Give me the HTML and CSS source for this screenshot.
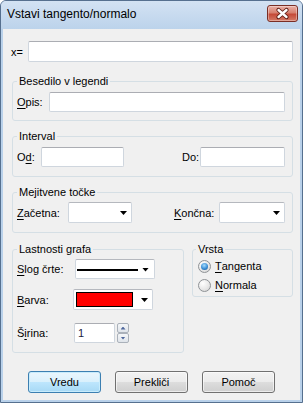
FILE: index.html
```html
<!DOCTYPE html>
<html>
<head>
<meta charset="UTF-8">
<title>Vstavi tangento/normalo</title>
<link rel="stylesheet" href="styles.css">
</head>
<body>
<div class="window">
<div class="titlebar">
<span class="title">Vstavi tangento/normalo</span>
<div class="close-btn">
<svg width="29" height="15" viewBox="0 0 29 15">
<path d="M10.5 4 L18.5 11 M18.5 4 L10.5 11" stroke="#5b1a12" stroke-width="4.2" stroke-linecap="round"/>
<path d="M10.5 4 L18.5 11 M18.5 4 L10.5 11" stroke="#fff" stroke-width="2.4" stroke-linecap="round"/>
</svg>
</div>
</div>
<div class="client">
<div class="row-x">
<label class="lbl-x" for="xVal">x=</label>
<input type="text" id="xVal" class="text grow tall">
</div>

<fieldset class="group g-first">
<legend>Besedilo v legendi</legend>
<div class="line">
<label class="lbl-opis" for="opis"><u>O</u>pis:</label>
<input type="text" id="opis" class="text grow">
</div>
</fieldset>

<fieldset class="group g-interval">
<legend>Interval</legend>
<div class="line">
<label class="lbl-od" for="od">O<u>d</u>:</label>
<input type="text" id="od" class="text w-od">
<label class="lbl-do" for="do">Do:</label>
<input type="text" id="do" class="text w-do">
</div>
</fieldset>

<fieldset class="group g-points">
<legend>Mejitvene točke</legend>
<div class="line">
<label class="lbl-zac"><u>Z</u>ačetna:</label>
<div class="combo w-zac"><span class="arrow"></span></div>
<label class="lbl-kon"><u>K</u>ončna:</label>
<div class="combo w-kon"><span class="arrow"></span></div>
</div>
</fieldset>

<div class="split">
<fieldset class="group props">
<legend>Lastnosti grafa</legend>
<div class="prop-row r-slog">
<label><u>S</u>log črte:</label>
<div class="combo short c-slog"><span class="line-sample"></span><span class="arrow"></span></div>
</div>
<div class="prop-row r-barva">
<label><u>B</u>arva:</label>
<div class="combo c-barva"><span class="swatch"></span><span class="arrow"></span></div>
</div>
<div class="prop-row r-sirina">
<label>Š<u>i</u>rina:</label>
<input type="text" class="text w-spin" value="1">
<div class="spin">
<div class="spin-btn"><span class="tri-up"></span></div>
<div class="spin-btn"><span class="tri-down"></span></div>
</div>
</div>
</fieldset>

<fieldset class="group kind">
<legend>Vrsta</legend>
<div class="radio-row"><span class="radio"><span class="dot"></span></span><u>T</u>angenta</div>
<div class="radio-row"><span class="radio"></span><u>N</u>ormala</div>
</fieldset>
</div>

<div class="buttons">
<button class="btn default">Vredu</button>
<button class="btn">Prekliči</button>
<button class="btn">Pomoč</button>
</div>
</div>
</div>
</body>
</html>
```

FILE: styles.css
```css
*{box-sizing:border-box;}
body{margin:0;background:#fff;font-family:"Liberation Sans",Arial,sans-serif;font-size:11px;color:#000;}
u{text-decoration:underline;text-underline-offset:2px;}

.window{width:303px;height:403px;display:flex;flex-direction:column;
border:1px solid #56708f;border-radius:6px 6px 0 0;background:#b9d1ea;}
.titlebar{height:28px;flex:none;display:flex;align-items:flex-start;justify-content:space-between;
padding:0 4px 0 6px;background:linear-gradient(#d3e2f3,#bcd3eb);border-radius:5px 5px 0 0;}
.title{font-size:12px;line-height:14px;margin-top:6px;}
.close-btn{width:31px;height:17px;margin-top:4px;border:1px solid #7a2e25;border-radius:3px;
background:linear-gradient(#e9b0a6 0%,#d7806f 45%,#c54a38 55%,#d47a66 100%);
box-shadow:inset 0 0 0 1px rgba(255,255,255,0.35);}
.close-btn svg{display:block;}

.client{flex:1;margin:0 2px 2px;background:#f0f0f0;padding:12px 7px 0 9px;}

.row-x{display:flex;align-items:center;}
.lbl-x{width:17px;margin-left:-1px;}

.text{height:20px;margin:0;padding:0 3px;border:1px solid #cfd6de;border-top-color:#abadb3;
border-radius:2px;background:#fff;font:inherit;color:#1c1c3c;outline:none;}
.text.tall{height:21px;}
.grow{flex:1;min-width:0;}

.group{margin:8px 0 0;padding:4px 7px 9px 4px;border:1px solid #d5dfe5;border-radius:3px;min-width:0;}
.group legend{padding:0 2px;line-height:14px;}
.g-first{margin-top:12px;padding-bottom:8px;}
.g-points{padding-top:3px;}

.line{display:flex;align-items:center;}
.lbl-opis{width:32px;}
.lbl-od{width:24px;}
.w-od{width:83px;}
.lbl-do{width:18px;margin-left:auto;}
.w-do{width:85px;}
.lbl-zac{width:51px;}
.w-zac{width:64px;}
.lbl-kon{width:45px;margin-left:auto;}
.w-kon{width:66px;}

.combo{height:21px;display:flex;align-items:center;border:1px solid #cfd6de;border-top-color:#b5b8be;
border-radius:2px;background:#fff;}
.combo.short{height:20px;}
.arrow{width:7px;height:4px;margin:1px 4px 0 auto;background:#000;clip-path:polygon(0 0,100% 0,50% 100%);}

.split{display:flex;gap:8px;align-items:flex-start;margin-top:9px;}
.props{width:172px;flex:none;margin:0;padding:3px 4px 9px;}
.kind{width:101px;flex:none;margin:0;padding:3px 4px 4px 3px;}

.prop-row{display:flex;align-items:center;}
.prop-row label{width:57px;}
.r-slog{margin-bottom:10px;}
.r-barva{margin-bottom:13px;}
.c-slog{width:80px;margin-left:1px;}
.c-barva{width:80px;margin-left:-1px;}
.line-sample{width:61px;height:2px;margin:1px 0 0 1px;background:#000;}
.c-slog .arrow{margin-right:5px;}
.swatch{width:57px;height:15px;margin-left:2px;background:#f00;border:1px solid #000;}
.w-spin{width:41px;}
.spin{display:flex;flex-direction:column;margin-left:2px;}
.spin-btn{width:12px;height:10px;display:flex;align-items:center;justify-content:center;
border:1px solid #aab1ba;border-radius:2px;background:linear-gradient(#f4f6f8,#dfe4ea);}
.tri-up,.tri-down{width:5px;height:3px;background:#4e679c;}
.tri-up{clip-path:polygon(50% 0,100% 100%,0 100%);}
.tri-down{clip-path:polygon(0 0,100% 0,50% 100%);}

.radio-row{display:flex;align-items:center;height:14px;margin-left:2px;}
.radio-row + .radio-row{margin-top:5px;}
.radio{width:13px;height:13px;margin-right:4px;display:flex;align-items:center;justify-content:center;
border:1px solid #8e9296;border-radius:50%;
background:radial-gradient(circle at 35% 30%,#ffffff,#e8e8e8 55%,#cfcfcf);}
.dot{width:7px;height:7px;border-radius:50%;
background:radial-gradient(circle at 45% 35%,#a6dcfd,#3b8fd6 55%,#124a86);}

.buttons{display:flex;margin-top:18px;padding-left:16px;}
.btn{width:73px;height:22px;margin:0;padding:0;font:inherit;color:#000;
border:1px solid #707070;border-radius:3px;
background:linear-gradient(#f2f2f2 0%,#ebebeb 50%,#dddddd 50%,#cfcfcf 100%);
box-shadow:inset 0 0 0 1px rgba(255,255,255,0.6);}
.btn + .btn{margin-left:14px;}
.btn.default{border-color:#3c7fb1;
background:linear-gradient(#eaf6fd 0%,#d9f0fc 50%,#bee6fd 50%,#a7d9f5 100%);
box-shadow:inset 0 0 0 1px #c8ecfc;}
```
